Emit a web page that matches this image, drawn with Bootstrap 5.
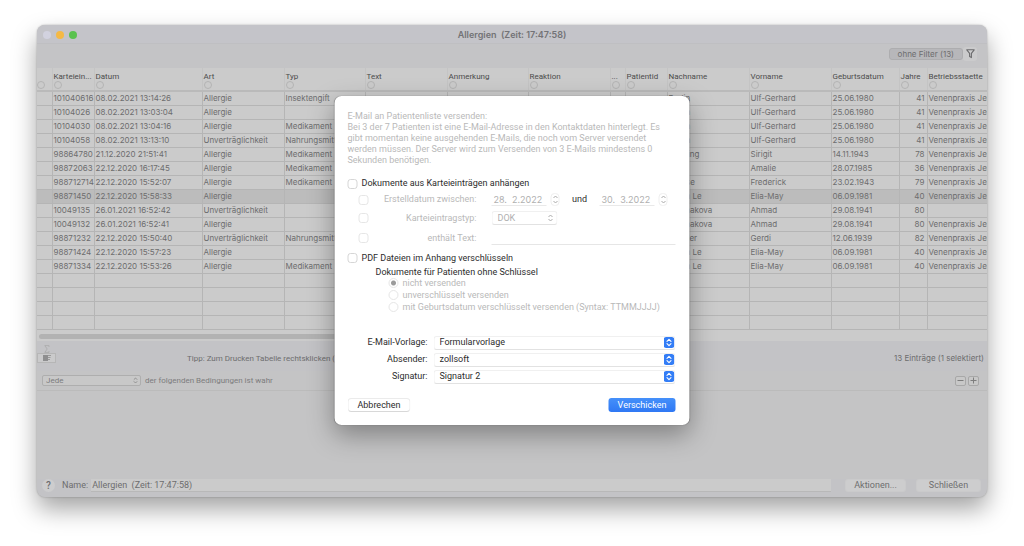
<!DOCTYPE html>
<html lang="de">
<head>
<meta charset="utf-8">
<meta name="viewport" content="width=device-width, initial-scale=1">
<title>Allergien (Zeit: 17:47:58)</title>
<link rel="stylesheet" href="https://cdn.jsdelivr.net/npm/bootstrap@5.3.0/dist/css/bootstrap.min.css">
<style>
body{font-family:Inter,"Liberation Sans",sans-serif;font-size:9px;line-height:11px;color:#6d6d6e;background:#fff;padding:25px 37px 49px}
button,input,select{font-size:9px;line-height:11px;color:inherit}
.win{background:#c4c4c5;border-radius:8px;box-shadow:0 12px 24px rgba(0,0,0,.36),0 0 2px rgba(0,0,0,.3)}
.inner{border-radius:8px}
.titlebar{height:19px;background:#c4c4c9;border-bottom:1px solid #bfbfc2;font-weight:600;color:#737376}
.lights{left:6px;top:6px;gap:5px}
.light{width:8px;height:8px;border-radius:50%}
.toolbar{height:24px;padding:0 10px 4px 0;background:#c4c4c6}
.filterbtn{height:12px;padding:0 8px;background:#b7b7ba;border:1px solid #adadaf;border-radius:3px;font-size:8px}
.funnel{width:14px;height:14px;background:#cbcbcc;border-radius:3px}
.grid-area{background:#cbcbcb}
.entries{table-layout:fixed;margin:0;white-space:nowrap}
.entries th{height:23px;padding:3px 0 0 1px;font-family:Roboto,sans-serif;font-size:8px;font-weight:400;line-height:11px;color:#4c4c4c;border-bottom:2px solid #bababa;border-left:1px solid #c4c4c4;overflow:hidden;vertical-align:top}
.entries td{height:14px;padding:0 0 0 1px;font-size:8px;line-height:13px;border-bottom:1px solid #b5b5b5;border-left:1px solid #b5b5b5;overflow:hidden}
.entries th:first-child,.entries td:first-child{border-left:0;padding-left:0}
.entries td.num{text-align:right;padding-right:2px}
.entries tr.chosen td{background:#bcbcbc}
.entries .dot{display:block;width:8px;height:8px;border:1px solid #b3b3b3;border-radius:50%;margin-top:-1px}
.scroll{height:11px;padding:4px 2px 0}
.thumb{width:56%;height:5px;border-radius:3px;background:#b2b2b2}
.foot{height:30px;background:#c3c3c6;padding:4px 3px 0 0}
.sum-col{width:19px}
.sumbtn{height:10px;width:19px;background:#cacacb;border:1px solid #b6b6b6}
.tip{padding-left:131px;font-size:8px;font-family:Roboto,sans-serif}
.small-text{font-size:8px}
.rules{height:20px;padding:0 8px 0 5px;border-bottom:1px solid #bbb;color:#7c7c7d}
.rules label,.anyall{font-family:Roboto,sans-serif}
.anyall{appearance:none;width:99px;height:11px;font-size:8px;line-height:9px;padding:0 3px;border:1px solid #aeaeae;border-radius:2px;background:#c8c8c8 url("data:image/svg+xml,%3Csvg xmlns='http://www.w3.org/2000/svg' viewBox='0 0 6 8' fill='none' stroke='%23858585'%3E%3Cpath d='M1 3l2-2 2 2M1 5l2 2 2-2'/%3E%3C/svg%3E") no-repeat right 2px center/5px 7px}
.pm{width:11px;height:10px;border:1px solid #a8a8a8;border-radius:2px;background:#c8c8c8}
.bottombar{padding:0 6px 5px 5px;background:#c3c3c6;border-radius:0 0 8px 8px;font-family:Roboto,sans-serif}
.help{width:13px;height:13px;border-radius:50%;background:#cdcdce;font-size:10px;font-weight:500}
.nametag{margin:0 3px 0 7px}
.namefield{height:13px;border:0;border-bottom:1px solid #b8b8b8;background:#cbcbcb;padding:0 1px;border-radius:0;min-width:0}
.plain{height:13px;background:#cdcdce;border-radius:3px;border:1px solid #cacacb}
/* Dialog sheet */
.sheet{top:71px;left:50%;transform:translateX(-50%);width:355px;padding:15px 14px 13px 13px;background:#fff;border-radius:7px;box-shadow:0 0 1px rgba(0,0,0,.4),0 10px 26px rgba(0,0,0,.34);color:#2c2c2c;font-family:Roboto,sans-serif;white-space:nowrap}
.off{color:#b9b9b9}
.line{height:20px}
.line.docs{height:15px;margin-top:10px}
.line.dates{height:17px}
.sheet .form-check-input{width:10px;height:10px;margin:0;border:1px solid #d6d6d6;border-radius:3px;float:none;flex:none;background-size:contain}
.sheet .form-check-input:disabled{border-color:#e6e6e6;opacity:1}
.sheet .form-check-input[type=radio]{border-radius:50%}
.sheet .form-check-input[type=radio]:checked{background:radial-gradient(circle,#9b9b9b 0 2px,#fff 3px)}
.sheet label{opacity:1!important}
.indent{padding-left:11px}
.criterion{width:108px;text-align:right;margin-right:15px}
.datefield{width:55px;height:13px;border:0;border-bottom:1px solid #e9e9e9;padding:0 2px;background:#fff;color:#b0b0b0;font-family:Inter,sans-serif}
.stepper{width:9px;height:13px;border:1px solid #efefef;border-radius:4px;background:#fff;margin-left:4px}
.sheet select{appearance:none;border:1px solid #f0f0f0;border-bottom-color:#e2e2e2;border-radius:3px;height:14px;padding:0 5px;opacity:1}
.sheet .kind{width:66px;color:#b0b0b0;background:#fff url("data:image/svg+xml,%3Csvg xmlns='http://www.w3.org/2000/svg' viewBox='0 0 6 8' fill='none' stroke='%23aaa'%3E%3Cpath d='M1 3l2-2 2 2M1 5l2 2 2-2'/%3E%3C/svg%3E") no-repeat right 3px center/6px 8px}
.textfield{height:13px;border:0;border-bottom:1px solid #e6e6e6;background:#fff;padding:0}
.sub{height:9px;padding-left:28px}
.choice{height:12px;padding-left:41px}
.pick{height:17px}
.pick label{width:80px;text-align:right;margin-right:6px}
.pick .blue{background:#fff url("data:image/svg+xml,%3Csvg xmlns='http://www.w3.org/2000/svg' viewBox='0 0 11 11'%3E%3Crect width='11' height='11' rx='3' fill='%23337df6'/%3E%3Cpath d='M3.5 4.4l2-2 2 2M3.5 6.6l2 2 2-2' fill='none' stroke='%23fff' stroke-width='1.1' stroke-linecap='round' stroke-linejoin='round'/%3E%3C/svg%3E") no-repeat right center/11px 11px}
.cancel{height:14px;width:63px;background:#fff;border:1px solid #ebebeb;border-bottom-color:#d8d8d8;border-radius:4px}
.send{height:14px;width:67px;background:linear-gradient(#4590fa,#2f78f4);border-radius:3px;color:#fff}
</style>
<script src="https://cdn.jsdelivr.net/npm/bootstrap@5.3.0/dist/js/bootstrap.bundle.min.js"></script>
</head>
<body class="d-flex flex-column min-vh-100">
<main class="win position-relative d-flex flex-column flex-grow-1">
  <div class="inner overflow-hidden d-flex flex-column flex-grow-1">
  <header class="titlebar position-relative d-flex align-items-center justify-content-center">
    <div class="lights position-absolute d-flex">
      <span class="light" style="background:#d2d2df"></span><span class="light" style="background:#f5b944"></span><span class="light" style="background:#5ac24e"></span>
    </div>
    <span>Allergien&nbsp; (Zeit: 17:47:58)</span>
  </header>
  <div class="toolbar d-flex align-items-center justify-content-end">
    <button class="filterbtn d-flex align-items-center">ohne Filter (13)</button>
    <button class="funnel border-0 p-0 d-flex align-items-center justify-content-center" aria-label="Filter"><svg width="9" height="10" viewBox="0 0 9 10" fill="none" stroke="#6c6c6e" stroke-width="1.1" stroke-linejoin="round"><path d="M.8.8h7.4L5.4 4.4v4.2l-1.8-1V4.4z"/></svg></button>
  </div>
  <div class="grid-area">
    <table class="entries w-100">
      <colgroup><col style="width:15px"><col style="width:42px"><col style="width:108px"><col style="width:82px"><col style="width:81px"><col style="width:82px"><col style="width:81px"><col style="width:82px"><col style="width:15px"><col style="width:42px"><col style="width:82px"><col style="width:82px"><col style="width:68px"><col style="width:28px"><col style="width:60px"></colgroup>
      <thead><tr><th>&nbsp;<span class="dot"></span></th><th>Karteiein...<span class="dot"></span></th><th>Datum<span class="dot"></span></th><th>Art<span class="dot"></span></th><th>Typ<span class="dot"></span></th><th>Text<span class="dot"></span></th><th>Anmerkung<span class="dot"></span></th><th>Reaktion<span class="dot"></span></th><th>...<span class="dot"></span></th><th>Patientid<span class="dot"></span></th><th>Nachname<span class="dot"></span></th><th>Vorname<span class="dot"></span></th><th>Geburtsdatum<span class="dot"></span></th><th>Jahre<span class="dot"></span></th><th>Betriebsstaette<span class="dot"></span></th></tr></thead>
      <tbody>
      <tr><td></td><td>101040616</td><td>08.02.2021 13:14:26</td><td>Allergie</td><td>Insektengift</td><td></td><td></td><td></td><td></td><td></td><td>Berlin</td><td>Ulf-Gerhard</td><td>25.06.1980</td><td class="num">41</td><td>Venenpraxis Jena</td></tr>
      <tr><td></td><td>10104026</td><td>08.02.2021 13:03:04</td><td>Allergie</td><td></td><td></td><td></td><td></td><td></td><td></td><td>Berlin</td><td>Ulf-Gerhard</td><td>25.06.1980</td><td class="num">41</td><td>Venenpraxis Jena</td></tr>
      <tr><td></td><td>10104030</td><td>08.02.2021 13:04:16</td><td>Allergie</td><td>Medikament</td><td></td><td></td><td></td><td></td><td></td><td>Berlin</td><td>Ulf-Gerhard</td><td>25.06.1980</td><td class="num">41</td><td>Venenpraxis Jena</td></tr>
      <tr><td></td><td>10104058</td><td>08.02.2021 13:13:10</td><td>Unverträglichkeit</td><td>Nahrungsmittel</td><td></td><td></td><td></td><td></td><td></td><td>Berlin</td><td>Ulf-Gerhard</td><td>25.06.1980</td><td class="num">41</td><td>Venenpraxis Jena</td></tr>
      <tr><td></td><td>98864780</td><td>21.12.2020 21:51:41</td><td>Allergie</td><td>Medikament</td><td></td><td></td><td></td><td></td><td></td><td>Spening</td><td>Sirigit</td><td>14.11.1943</td><td class="num">78</td><td>Venenpraxis Jena</td></tr>
      <tr><td></td><td>98872063</td><td>22.12.2020 16:17:45</td><td>Allergie</td><td>Medikament</td><td></td><td></td><td></td><td></td><td></td><td></td><td>Amalie</td><td>28.07.1985</td><td class="num">36</td><td>Venenpraxis Jena</td></tr>
      <tr><td></td><td>988712714</td><td>22.12.2020 15:52:07</td><td>Allergie</td><td>Medikament</td><td></td><td></td><td></td><td></td><td></td><td>Krause</td><td>Frederick</td><td>23.02.1943</td><td class="num">79</td><td>Venenpraxis Jena</td></tr>
      <tr class="chosen"><td></td><td>98871450</td><td>22.12.2020 15:58:33</td><td>Allergie</td><td></td><td></td><td></td><td></td><td></td><td></td><td>Tranh Le</td><td>Elia-May</td><td>06.09.1981</td><td class="num">40</td><td>Venenpraxis Jena</td></tr>
      <tr><td></td><td>10049135</td><td>26.01.2021 16:52:42</td><td>Unverträglichkeit</td><td></td><td></td><td></td><td></td><td></td><td></td><td>Bulonakova</td><td>Ahmad</td><td>29.08.1941</td><td class="num">80</td><td></td></tr>
      <tr><td></td><td>10049132</td><td>26.01.2021 16:52:41</td><td>Allergie</td><td></td><td></td><td></td><td></td><td></td><td></td><td>Bulonakova</td><td>Ahmad</td><td>29.08.1941</td><td class="num">80</td><td>Venenpraxis Jena</td></tr>
      <tr><td></td><td>98871232</td><td>22.12.2020 15:50:40</td><td>Unverträglichkeit</td><td>Nahrungsmittel</td><td></td><td></td><td></td><td></td><td></td><td>Winkler</td><td>Gerdi</td><td>12.06.1939</td><td class="num">82</td><td>Venenpraxis Jena</td></tr>
      <tr><td></td><td>98871424</td><td>22.12.2020 15:57:23</td><td>Allergie</td><td></td><td></td><td></td><td></td><td></td><td></td><td>Tranh Le</td><td>Elia-May</td><td>06.09.1981</td><td class="num">40</td><td>Venenpraxis Jena</td></tr>
      <tr><td></td><td>98871334</td><td>22.12.2020 15:53:26</td><td>Allergie</td><td>Medikament</td><td></td><td></td><td></td><td></td><td></td><td>Tranh Le</td><td>Elia-May</td><td>06.09.1981</td><td class="num">40</td><td>Venenpraxis Jena</td></tr>
      <tr><td></td><td></td><td></td><td></td><td></td><td></td><td></td><td></td><td></td><td></td><td></td><td></td><td></td><td></td><td></td></tr>
      <tr><td></td><td></td><td></td><td></td><td></td><td></td><td></td><td></td><td></td><td></td><td></td><td></td><td></td><td></td><td></td></tr>
      <tr><td></td><td></td><td></td><td></td><td></td><td></td><td></td><td></td><td></td><td></td><td></td><td></td><td></td><td></td><td></td></tr>
      <tr><td></td><td></td><td></td><td></td><td></td><td></td><td></td><td></td><td></td><td></td><td></td><td></td><td></td><td></td><td></td></tr>
      </tbody>
    </table>
    <div class="scroll"><div class="thumb"></div></div>
  </div>
  <div class="foot d-flex align-items-start">
    <div class="sum-col d-flex flex-column align-items-center">
      <svg width="6" height="8" viewBox="0 0 6 8" fill="none" stroke="#aaa" stroke-width=".8"><path d="M5 2V.6H.8L3.2 4 .8 7.4H5V6"/></svg>
      <button class="sumbtn p-0 d-flex align-items-center justify-content-center" aria-label="Summen"><svg width="8" height="6" viewBox="0 0 8 6"><path d="M0 0h5v6H0z" fill="#8e8e8f"/><path d="M5 .5h3M5 2.5h2.5M5 4.500h2" stroke="#999"/></svg></button>
    </div>
    <span class="tip pt-2">Tipp: Zum Drucken Tabelle rechtsklicken (ggf.)</span>
    <span class="ms-auto pt-2 small-text">13 Einträge (1 selektiert)</span>
  </div>
  <div class="rules d-flex align-items-center">
    <select class="anyall" id="anyall"><option>Jede</option></select>
    <label for="anyall" class="small-text ms-1">der folgenden Bedingungen ist wahr</label>
    <button class="pm p-0 ms-auto d-flex align-items-center justify-content-center" aria-label="Entfernen"><svg width="7" height="7" viewBox="0 0 7 7" stroke="#7d7d7d"><path d="M.5 3.500h6"/></svg></button>
    <button class="pm p-0 d-flex align-items-center justify-content-center" style="margin-left:2px" aria-label="Hinzufügen"><svg width="7" height="7" viewBox="0 0 7 7" stroke="#7d7d7d"><path d="M.5 3.500h6M3.500.5v6"/></svg></button>
  </div>
  <footer class="bottombar mt-auto d-flex align-items-center">
    <button class="help border-0 p-0 d-flex align-items-center justify-content-center" aria-label="Hilfe">?</button>
    <label for="nm" class="nametag">Name:</label>
    <input id="nm" class="namefield flex-grow-1" value="Allergien  (Zeit: 17:47:58)">
    <button class="plain p-0" style="width:61px;margin-left:14px">Aktionen...</button>
    <button class="plain p-0" style="width:65px;margin-left:10px">Schließen</button>
  </footer>
  </div>

  <form class="sheet position-absolute" role="dialog" aria-label="E-Mail versenden">
    <p class="off mb-0">E-Mail an Patientenliste versenden:<br>Bei 3 der 7 Patienten ist eine E-Mail-Adresse in den Kontaktdaten hinterlegt. Es<br>gibt momentan keine ausgehenden E-Mails, die noch vom Server versendet<br>werden müssen. Der Server wird zum Versenden von 3 E-Mails mindestens 0<br>Sekunden benötigen.</p>
    <div class="line docs d-flex align-items-center gap-1"><input class="form-check-input" type="checkbox" id="c1"><label for="c1">Dokumente aus Karteieinträgen anhängen</label></div>
    <div class="line dates indent off d-flex align-items-center">
      <input class="form-check-input" type="checkbox" id="c2" disabled><label for="c2" class="criterion">Erstelldatum zwischen:</label>
      <input class="datefield" value="28.  2.2022" aria-label="von">
      <button type="button" class="stepper p-0 d-flex align-items-center justify-content-center" aria-label="Datum ändern"><svg width="6" height="9" viewBox="0 0 6 9" fill="none" stroke="#aaa"><path d="M1 3l2-2 2 2M1 6l2 2 2-2"/></svg></button>
      <span class="text-center flex-grow-1" style="color:#2c2c2c">und</span>
      <input class="datefield" value="30.  3.2022" aria-label="bis">
      <button type="button" class="stepper p-0 d-flex align-items-center justify-content-center me-2" aria-label="Datum ändern"><svg width="6" height="9" viewBox="0 0 6 9" fill="none" stroke="#aaa"><path d="M1 3l2-2 2 2M1 6l2 2 2-2"/></svg></button>
    </div>
    <div class="line indent off d-flex align-items-center">
      <input class="form-check-input" type="checkbox" id="c3" disabled><label for="c3" class="criterion">Karteieintragstyp:</label>
      <select class="kind" disabled aria-label="Typ"><option>DOK</option></select>
    </div>
    <div class="line indent off d-flex align-items-center">
      <input class="form-check-input" type="checkbox" id="c4" disabled><label for="c4" class="criterion">enthält Text:</label>
      <input class="textfield flex-grow-1" disabled aria-label="Text">
    </div>
    <div class="line d-flex align-items-center gap-1"><input class="form-check-input" type="checkbox" id="c5"><label for="c5">PDF Dateien im Anhang verschlüsseln</label></div>
    <div class="sub d-flex align-items-center">Dokumente für Patienten ohne Schlüssel</div>
    <div class="choice off d-flex align-items-center gap-1"><input class="form-check-input" type="radio" name="k" id="r1" checked disabled><label for="r1">nicht versenden</label></div>
    <div class="choice off d-flex align-items-center gap-1"><input class="form-check-input" type="radio" name="k" id="r2" disabled><label for="r2">unverschlüsselt versenden</label></div>
    <div class="choice off d-flex align-items-center gap-1"><input class="form-check-input" type="radio" name="k" id="r3" disabled><label for="r3">mit Geburtsdatum verschlüsselt versenden (Syntax: TTMMJJJJ)</label></div>
    <div class="pick d-flex align-items-center" style="margin-top:21px"><label for="s1">E-Mail-Vorlage:</label><select id="s1" class="blue flex-grow-1"><option>Formularvorlage</option></select></div>
    <div class="pick d-flex align-items-center"><label for="s2">Absender:</label><select id="s2" class="blue flex-grow-1"><option>zollsoft</option></select></div>
    <div class="pick d-flex align-items-center"><label for="s3">Signatur:</label><select id="s3" class="blue flex-grow-1"><option>Signatur 2</option></select></div>
    <div class="d-flex justify-content-between" style="margin-top:13px"><button type="button" class="cancel p-0">Abbrechen</button><button type="button" class="send border-0 p-0">Verschicken</button></div>
  </form>
</main>
</body>
</html>
